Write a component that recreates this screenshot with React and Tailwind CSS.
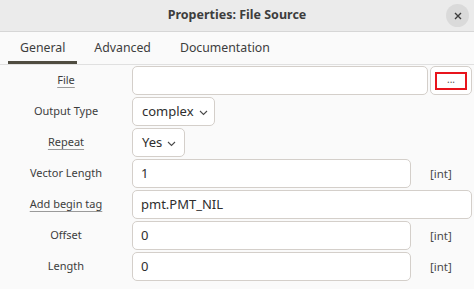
import React from 'react';

const font = { fontFamily: '"Noto Sans", "DejaVu Sans", sans-serif' };

const Label = ({ children, link }) => (
  <div className="w-[132px] shrink-0 text-center text-[11px] text-[#3d3d3d]">
    <span className={link ? 'underline decoration-[#9a9a9a] underline-offset-[3px]' : ''}>{children}</span>
  </div>
);

const Field = ({ value, className = '' }) => (
  <div className={`h-[29px] flex items-center px-[8px] bg-white border border-[#d4cfca] rounded-[5px] text-[13px] text-[#2e2e2e] ${className}`}>
    {value}
  </div>
);

const Select = ({ value, w }) => (
  <div className={`h-[29px] ${w} shrink-0 whitespace-nowrap flex items-center gap-[5px] px-[9px] bg-white border border-[#d4cfca] rounded-[5px] text-[13px] text-[#2e2e2e]`}>
    {value}
    <svg width="9" height="6" viewBox="0 0 9 6" className="mt-[2px] shrink-0">
      <path d="M1 1l3.5 3.5L8 1" fill="none" stroke="#4a4a4a" strokeWidth="1.1" />
    </svg>
  </div>
);

const Unit = () => (
  <div className="w-[61px] pl-[19px] text-[11.5px] text-[#4a4a4a]">[int]</div>
);

export default function App() {
  return (
    <div style={font} className="w-[474px] h-[289px] bg-[#fafafa] overflow-hidden">
      {/* Title bar */}
      <div className="h-[32px] bg-[#ebebeb] border-b border-[#d6d6d6] flex items-center relative">
        <div className="w-full text-center text-[12.5px] font-bold text-[#3d3d3d]">Properties: File Source</div>
        <div className="absolute right-[5px] top-[4px] w-[23px] h-[23px] rounded-full bg-[#dadada] flex items-center justify-center">
          <svg width="8" height="8" viewBox="0 0 8 8">
            <path d="M1 1l6 6M7 1L1 7" stroke="#3d3d3d" strokeWidth="1.4" />
          </svg>
        </div>
      </div>

      {/* Tabs */}
      <div className="h-[33px] flex items-end pl-[8px] gap-[5px] border-b border-[#e0e0e0] text-[12.3px] text-[#3d3d3d]">
        <div className="px-[12px] h-full flex items-center border-b-[3px] border-[#4f4c40] pt-[3px]">General</div>
        <div className="px-[12px] h-full flex items-center">Advanced</div>
        <div className="px-[12px] h-full flex items-center">Documentation</div>
      </div>

      {/* Form */}
      <div className="flex flex-col gap-[2px] pt-[1px]">
        <div className="flex items-center">
          <Label link>File</Label>
          <Field value="" className="w-[296px]" />
          <div className="ml-[2px] h-[29px] w-[42px] bg-white border border-[#d4cfca] rounded-[5px] flex items-center justify-center">
            <div className="w-[32px] h-[18px] border-2 border-[#e8141c] flex items-center justify-center text-[10px] text-[#555] leading-none pb-[3px]">...</div>
          </div>
        </div>
        <div className="flex items-center">
          <Label>Output Type</Label>
          <Select value="complex" w="w-[83px]" />
        </div>
        <div className="flex items-center">
          <Label link>Repeat</Label>
          <Select value="Yes" w="w-[53px]" />
        </div>
        <div className="flex items-center">
          <Label>Vector Length</Label>
          <Field value="1" className="w-[279px]" />
          <Unit />
        </div>
        <div className="flex items-center">
          <Label link>Add begin tag</Label>
          <Field value="pmt.PMT_NIL" className="w-[340px]" />
        </div>
        <div className="flex items-center">
          <Label>Offset</Label>
          <Field value="0" className="w-[279px]" />
          <Unit />
        </div>
        <div className="flex items-center">
          <Label>Length</Label>
          <Field value="0" className="w-[279px]" />
          <Unit />
        </div>
      </div>
    </div>
  );
}
